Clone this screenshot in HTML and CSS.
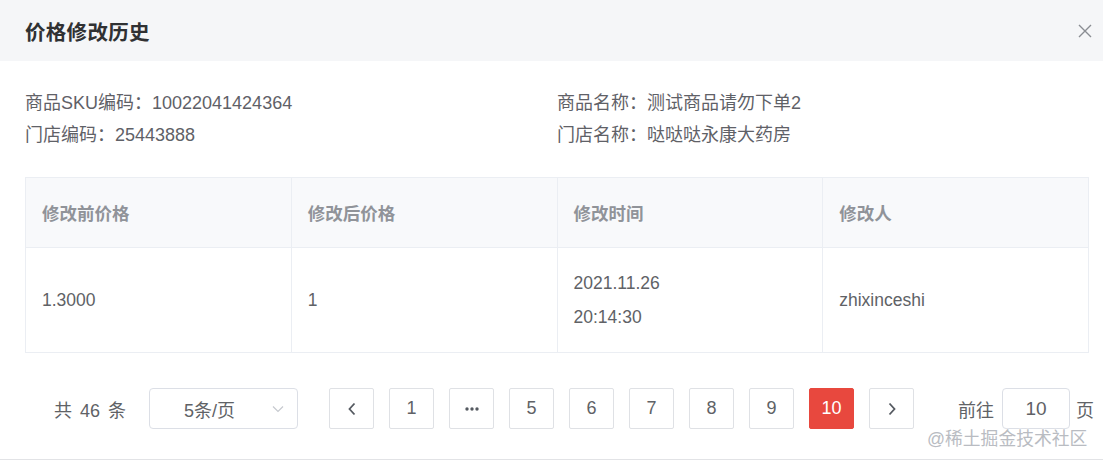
FILE: index.html
```html
<!DOCTYPE html>
<html lang="zh-CN">
<head>
<meta charset="utf-8">
<title>价格修改历史</title>
<link rel="stylesheet" href="styles.css">
</head>
<body>
<div class="dialog">
  <div class="dialog-header">
    <span class="dialog-title">价格修改历史</span>
    <span class="close-btn">
      <svg width="14" height="14" viewBox="0 0 14 14"><path d="M1 1L13 13M13 1L1 13" stroke="#8a8d93" stroke-width="1.4" fill="none"/></svg>
    </span>
  </div>
  <div class="dialog-body">
    <div class="info">
      <div class="info-item">商品SKU编码：10022041424364</div>
      <div class="info-item">商品名称：测试商品请勿下单2</div>
      <div class="info-item">门店编码：25443888</div>
      <div class="info-item">门店名称：哒哒哒永康大药房</div>
    </div>
    <table class="history">
      <thead>
        <tr><th>修改前价格</th><th>修改后价格</th><th>修改时间</th><th>修改人</th></tr>
      </thead>
      <tbody>
        <tr>
          <td>1.3000</td>
          <td>1</td>
          <td><div class="two-line">2021.11.26<br>20:14:30</div></td>
          <td>zhixinceshi</td>
        </tr>
      </tbody>
    </table>
    <div class="pagination">
      <span class="total">共 46 条</span>
      <div class="size-select">
        <span>5条/页</span>
        <svg class="select-arrow" width="12" height="8" viewBox="0 0 12 8"><path d="M1 1.5L6 6.5L11 1.5" stroke="#c6c9cf" stroke-width="1.2" fill="none"/></svg>
      </div>
      <div class="pager">
        <span class="page-btn"><svg width="10" height="14" viewBox="0 0 10 14"><path d="M7.5 1.5L2.5 7L7.5 12.5" stroke="#555a61" stroke-width="1.8" fill="none"/></svg></span>
        <span class="page-btn">1</span>
        <span class="page-btn"><svg width="16" height="6" viewBox="0 0 16 6"><circle cx="3" cy="3" r="1.7" fill="#555a61"/><circle cx="8" cy="3" r="1.7" fill="#555a61"/><circle cx="13" cy="3" r="1.7" fill="#555a61"/></svg></span>
        <span class="page-btn">5</span>
        <span class="page-btn">6</span>
        <span class="page-btn">7</span>
        <span class="page-btn">8</span>
        <span class="page-btn">9</span>
        <span class="page-btn active">10</span>
        <span class="page-btn"><svg width="10" height="14" viewBox="0 0 10 14"><path d="M2.5 1.5L7.5 7L2.5 12.5" stroke="#555a61" stroke-width="1.8" fill="none"/></svg></span>
      </div>
      <div class="jumper">
        <span>前往</span>
        <span class="jump-input">10</span>
        <span>页</span>
      </div>
    </div>
  </div>
  <div class="watermark">@稀土掘金技术社区</div>
</div>
</body>
</html>
```

FILE: styles.css
```css
* { box-sizing: border-box; }

body {
  margin: 0;
  background: #ffffff;
  font-family: "Liberation Sans", "Noto Sans CJK SC", sans-serif;
  color: #606266;
}

.dialog {
  position: relative;
  width: 1103px;
  height: 460px;
  border-bottom: 1px solid #e2e3e6;
  background: #ffffff;
  overflow: hidden;
}

.dialog-header {
  height: 61px;
  background: #f5f6f8;
  display: flex;
  align-items: center;
  justify-content: space-between;
  padding: 0 11px 0 25px;
}

.dialog-title {
  font-size: 20.5px;
  font-weight: 700;
  color: #303133;
  letter-spacing: 0.3px;
}

.close-btn {
  display: flex;
  width: 14px;
  height: 14px;
  margin-top: 1px;
}

.dialog-body {
  padding: 26px 0 0 25px;
}

.info {
  display: grid;
  grid-template-columns: 532px 1fr;
  font-size: 18px;
  line-height: 32px;
  color: #5f6167;
}

.history {
  margin-top: 26px;
  width: 1064px;
  border-collapse: collapse;
  table-layout: fixed;
  font-size: 17.5px;
}

.history th,
.history td {
  border: 1px solid #ebeef3;
  text-align: left;
  padding: 0 16px;
}

.history th {
  height: 70px;
  background: #f8f9fb;
  color: #909399;
  font-weight: 700;
}

.history td {
  height: 105px;
  color: #606266;
}

.two-line {
  line-height: 34px;
}

.pagination {
  margin-top: 35px;
  display: flex;
  align-items: center;
  padding-left: 29px;
  height: 41px;
  font-size: 18px;
  color: #606266;
  white-space: nowrap;
}

.pagination > * {
  flex: none;
}

.total {
  margin-right: 23px;
  word-spacing: 3px;
}

.size-select {
  width: 149px;
  height: 41px;
  border: 1px solid #dcdfe6;
  border-radius: 4px;
  display: flex;
  align-items: center;
  justify-content: space-between;
  padding: 0 13px 0 34px;
  margin-right: 31px;
}

.select-arrow {
  display: block;
}

.pager {
  display: flex;
  gap: 15px;
}

.page-btn {
  flex: none;
  width: 45px;
  height: 41px;
  border: 1px solid #dfe1e5;
  border-radius: 2px;
  display: flex;
  align-items: center;
  justify-content: center;
  color: #606266;
  background: #ffffff;
}

.page-btn.active {
  background: #e8483e;
  border-color: #e8483e;
  color: #ffffff;
}

.jumper {
  display: flex;
  align-items: center;
  margin-left: 44px;
  gap: 8px;
}

.jump-input {
  width: 68px;
  height: 41px;
  border: 1px solid #dcdfe6;
  border-radius: 4px;
  display: flex;
  align-items: center;
  justify-content: center;
  margin-right: -2px;
  font-size: 19px;
}

.watermark {
  position: absolute;
  left: 927px;
  top: 424px;
  font-size: 17.8px;
  color: #b9bcc2;
  text-shadow: 0 0 2px #ffffff, 0 0 2px #ffffff;
}
```
